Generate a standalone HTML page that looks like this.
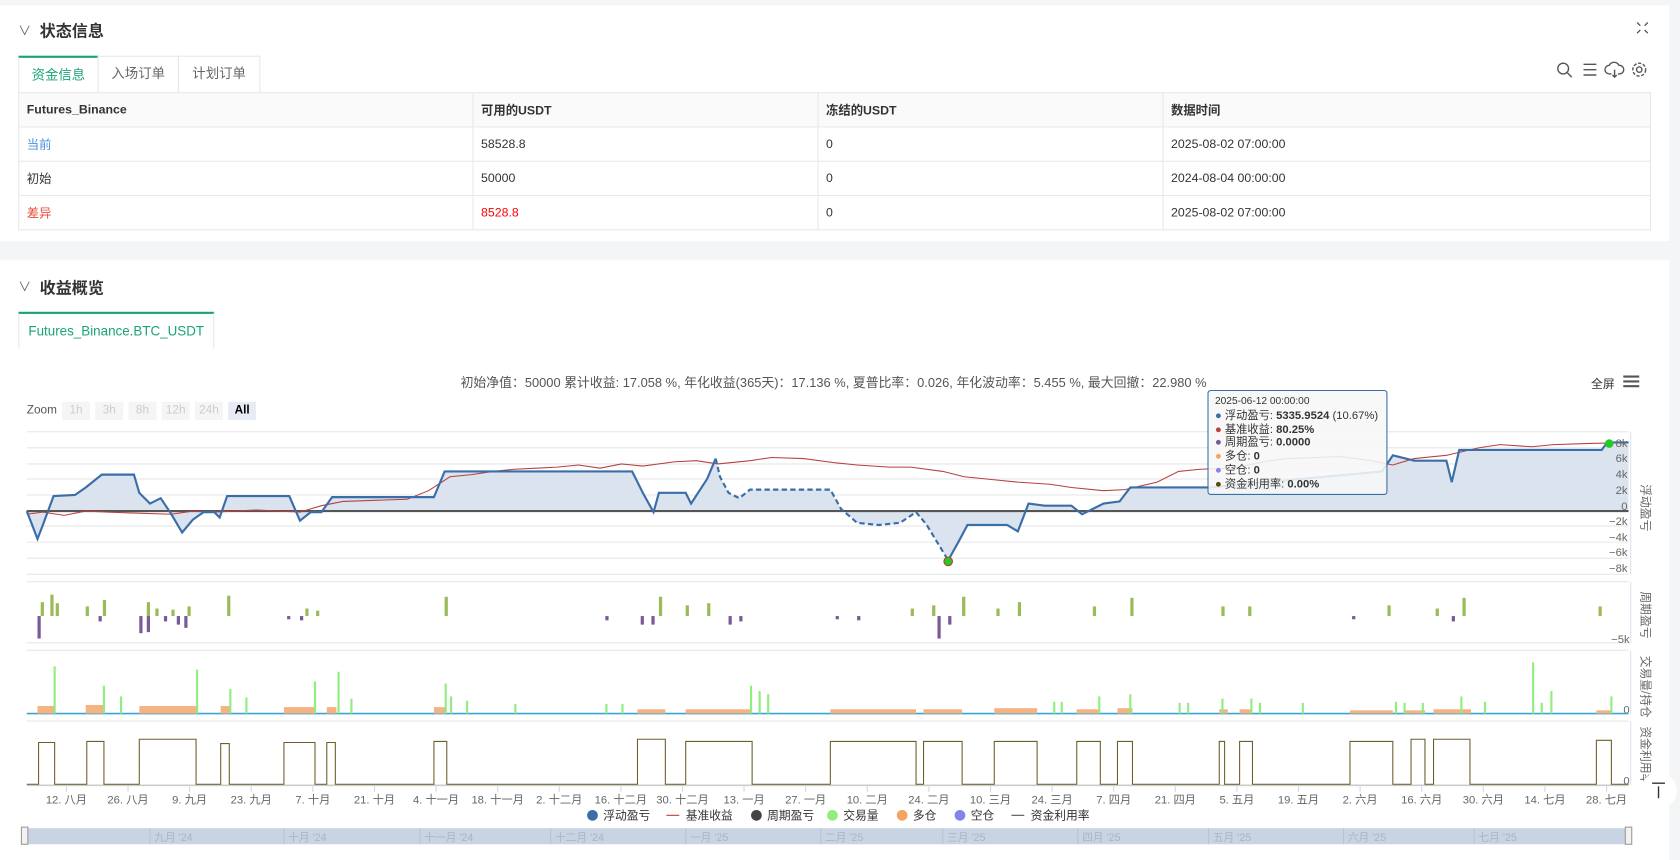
<!DOCTYPE html>
<html><head><meta charset="utf-8"><style>
html,body{margin:0;padding:0;width:1680px;height:860px;overflow:hidden;background:#f4f5f7;font-family:"Liberation Sans","Noto Sans CJK SC",sans-serif;}
#w{position:absolute;left:0;top:0;width:1568px;height:803px;transform:scale(1.0714);transform-origin:0 0;}
.p{position:absolute;left:0;width:1558px;background:#fff;}
.a{position:absolute;white-space:nowrap;}
table{border-collapse:collapse;position:absolute;left:17px;top:86px;width:1524px;font-size:11.5px;color:#333;}
td{border:1px solid #e8e8e8;height:31px;padding:0 0 0 7px;}
tr.h td{background:#fafafa;font-weight:bold;}
.tab{position:absolute;top:52px;height:34px;border:1px solid #e8e8e8;border-bottom:none;font-size:12.5px;color:#666;text-align:center;line-height:33px;box-sizing:border-box;}
.zb{position:absolute;top:375px;width:26px;height:17px;background:#f5f5f5;color:#ccc;font-size:11px;text-align:center;line-height:17px;}
</style></head><body><div id="w">
<div class="p" style="top:5px;height:220px"></div>
<div class="p" style="top:243px;height:560px"></div>
<div class="a" style="left:17px;top:20px;font-size:12px;color:#666">∨</div>
<div class="a" style="left:37px;top:18px;font-size:15px;color:#333;font-weight:bold">状态信息</div>
<svg class="a" style="left:1527px;top:20px" width="12" height="12" fill="none" stroke="#555" stroke-width="1.2"><path d="M1 1l3 3M11 1l-3 3M1 11l3-3M11 11l-3-3"/></svg>
<div class="tab" style="left:17px;width:75px;border-top:2px solid #1aa37a;color:#1aa37a">资金信息</div>
<div class="tab" style="left:91px;width:76px">入场订单</div>
<div class="tab" style="left:166px;width:77px">计划订单</div>
<svg class="a" style="left:1450px;top:56px" width="95" height="20" fill="none" stroke="#555" stroke-width="1.3">
<circle cx="9" cy="8" r="5"/><path d="M13 12l4 4"/>
<path d="M28 4h12M28 9h12M28 14h12"/>
<path d="M54 13h-2a4 4 0 0 1 0-8 5 5 0 0 1 9 0 4 4 0 0 1 1 8h-2M57 9v7M55 14l2 2 2-2"/>
<circle cx="80" cy="9" r="2.5"/><circle cx="80" cy="9" r="6" stroke-dasharray="3 1.5"/>
</svg>
<table>
<tr class="h"><td style="width:416px">Futures_Binance</td><td style="width:314px">可用的USDT</td><td style="width:314px">冻结的USDT</td><td>数据时间</td></tr>
<tr><td style="color:#4a90e2">当前</td><td>58528.8</td><td>0</td><td>2025-08-02 07:00:00</td></tr>
<tr><td>初始</td><td>50000</td><td>0</td><td>2024-08-04 00:00:00</td></tr>
<tr><td style="color:#e74c3c">差异</td><td style="color:#f00">8528.8</td><td>0</td><td>2025-08-02 07:00:00</td></tr>
</table>
<div class="a" style="left:17px;top:259px;font-size:12px;color:#666">∨</div>
<div class="a" style="left:37px;top:258px;font-size:15px;color:#333;font-weight:bold">收益概览</div>
<div class="tab" style="left:17px;top:291px;width:183px;border-top:2px solid #1aa37a;color:#1aa37a">Futures_Binance.BTC_USDT</div>
<div class="a" style="left:0;width:1556px;top:348px;text-align:center;font-size:12px;color:#555">初始净值：50000 累计收益: 17.058 %, 年化收益(365天)：17.136 %, 夏普比率：0.026, 年化波动率：5.455 %, 最大回撤：22.980 %</div>
<div class="a" style="left:1485px;top:350px;font-size:11px;color:#333">全屏</div>
<svg class="a" style="left:1515px;top:350px" width="16" height="12"><path d="M0 1.5h15M0 6h15M0 10.5h15" stroke="#555" stroke-width="2"/></svg>
<div class="a" style="left:25px;top:377px;font-size:11px;color:#555">Zoom</div>
<div class="zb" style="left:58px">1h</div><div class="zb" style="left:89px">3h</div><div class="zb" style="left:120px">8h</div><div class="zb" style="left:151px">12h</div><div class="zb" style="left:182px">24h</div><div class="zb" style="left:213px;background:#e6ebf5;color:#000;font-weight:bold">All</div>
<svg class="a" style="left:0;top:0" width="1568" height="803" font-family="Liberation Sans, Noto Sans CJK SC, sans-serif" font-size="10.5" fill="#666">
<g stroke="#e6e6e6" stroke-width="1">
<path d="M25 403H1520M25 418H1520M25 433H1520M25 447H1520M25 462H1520M25 491H1520M25 506H1520M25 521H1520M25 536H1520M25 543H1520M25 600H1520M25 607H1520M25 673H1520"/>
</g>
<path d="M1522 403V536M1522 543V600M1522 607V667M1522 673V733" stroke="#dde3ee"/>
<polygon fill="#dbe3ee" points="25,477 35,503 40,490 50,463 70,462 80,455 95,443 125,443 130,460 140,470 150,465 160,480 170,497 180,485 190,478 200,478 205,483 212,463 270,463 280,486 290,478 300,478 310,464 405,464 415,440 590,440 600,460 610,478 615,460 640,460 645,470 660,447 668,428 672,445 680,460 690,465 700,457 775,457 785,475 800,488 820,490 840,488 855,478 865,490 885,523 895,505 903,490 940,490 950,496 960,470 975,472 1000,472 1010,480 1030,470 1045,468 1055,455 1130,455 1150,453 1290,440 1300,425 1320,430 1350,430 1355,450 1362,420 1465,420 1495,420 1500,413 1520,413 1520,477"/>
<path d="M25 477H1520" stroke="#555" stroke-width="2"/>
<polyline fill="none" stroke="#b94040" stroke-width="1" points="25,480 40,478 60,481 80,477 100,478 130,479 160,480 180,477 200,478 240,476 280,478 300,472 320,468 350,467 380,466 400,458 420,445 440,443 460,440 480,438 500,437 520,436 540,434 560,437 580,433 600,435 630,431 650,430 670,433 700,430 720,427 750,428 780,432 800,434 830,436 850,436 880,440 900,445 930,448 950,450 980,452 1000,455 1030,458 1050,457 1080,450 1100,440 1120,438 1150,437 1180,431 1200,428 1230,427 1250,426 1280,430 1300,434 1320,428 1350,425 1380,418 1400,415 1430,417 1450,415 1480,414 1520,413"/>
<polyline fill="none" stroke="#3a6ea8" stroke-width="2" points="25,477 35,503 40,490 50,463 70,462 80,455 95,443 125,443 130,460 140,470 150,465 160,480 170,497 180,485 190,478 200,478 205,483 212,463 270,463 280,486 290,478 300,478 310,464 405,464 415,440 590,440 600,460 610,478 615,460 640,460 645,470 660,447 668,428"/>
<polyline fill="none" stroke="#3a6ea8" stroke-width="2" stroke-dasharray="5 3" points="668,428 672,445 680,460 690,465 700,457 775,457 785,475 800,488 820,490 840,488 855,478 865,490 885,523"/>
<polyline fill="none" stroke="#3a6ea8" stroke-width="2" points="885,523 895,505 903,490 940,490 950,496 960,470 975,472 1000,472 1010,480 1030,470 1045,468 1055,455 1130,455 1150,453 1290,440 1300,425 1320,430 1350,430 1355,450 1362,420 1465,420 1495,420 1500,413 1520,413"/>
<circle cx="885" cy="524" r="4" fill="#2c2" stroke="#c33"/><circle cx="1502" cy="414" r="4" fill="#2c2"/>
<g text-anchor="end"><text x="1519" y="417">8k</text><text x="1519" y="431">6k</text><text x="1519" y="446">4k</text><text x="1519" y="461">2k</text><text x="1519" y="476">0</text><text x="1519" y="490">−2k</text><text x="1519" y="505">−4k</text><text x="1519" y="519">−6k</text><text x="1519" y="534">−8k</text><text x="1521" y="600">−5k</text><text x="1521" y="666">0</text><text x="1521" y="732">0</text></g>
<g font-size="11"><text transform="translate(1532,452) rotate(90)">浮动盈亏</text><text transform="translate(1532,552) rotate(90)">周期盈亏</text><text transform="translate(1532,612) rotate(90)">交易量/持仓</text><text transform="translate(1532,678) rotate(90)">资金利用率</text></g>
<g fill="#9bbb59"><rect x="38" y="562" width="3" height="13"/><rect x="47" y="555" width="3" height="20"/><rect x="52" y="563" width="3" height="12"/><rect x="80" y="566" width="3" height="9"/><rect x="96" y="560" width="3" height="15"/><rect x="137" y="562" width="3" height="13"/><rect x="145" y="568" width="3" height="7"/><rect x="160" y="569" width="3" height="6"/><rect x="175" y="566" width="3" height="9"/><rect x="212" y="556" width="3" height="19"/><rect x="285" y="568" width="3" height="7"/><rect x="295" y="570" width="3" height="5"/><rect x="415" y="557" width="3" height="18"/><rect x="615" y="557" width="3" height="18"/><rect x="640" y="565" width="3" height="10"/><rect x="660" y="563" width="3" height="12"/><rect x="850" y="568" width="3" height="7"/><rect x="870" y="565" width="3" height="10"/><rect x="898" y="557" width="3" height="18"/><rect x="930" y="568" width="3" height="7"/><rect x="950" y="562" width="3" height="13"/><rect x="1020" y="566" width="3" height="9"/><rect x="1055" y="558" width="3" height="17"/><rect x="1140" y="566" width="3" height="9"/><rect x="1165" y="566" width="3" height="9"/><rect x="1295" y="565" width="3" height="10"/><rect x="1340" y="568" width="3" height="7"/><rect x="1365" y="558" width="3" height="17"/><rect x="1492" y="566" width="3" height="9"/></g>
<g fill="#7a5a96"><rect x="35" y="575" width="3" height="21"/><rect x="92" y="575" width="3" height="5"/><rect x="130" y="575" width="3" height="16"/><rect x="137" y="575" width="3" height="15"/><rect x="153" y="575" width="3" height="5"/><rect x="165" y="575" width="3" height="8"/><rect x="172" y="575" width="3" height="11"/><rect x="268" y="575" width="3" height="3"/><rect x="280" y="575" width="3" height="4"/><rect x="565" y="575" width="3" height="4"/><rect x="598" y="575" width="3" height="8"/><rect x="608" y="575" width="3" height="8"/><rect x="680" y="575" width="3" height="8"/><rect x="690" y="575" width="3" height="5"/><rect x="780" y="575" width="3" height="3"/><rect x="800" y="575" width="3" height="4"/><rect x="875" y="575" width="3" height="21"/><rect x="885" y="575" width="3" height="8"/><rect x="1262" y="575" width="3" height="3"/><rect x="1355" y="575" width="3" height="5"/></g>
<path d="M25 666H1520" stroke="#3ba3d6" stroke-width="1.5"/>
<g fill="#f4b380"><rect x="35" y="659" width="16" height="7"/><rect x="80" y="658" width="17" height="8"/><rect x="130" y="659" width="54" height="7"/><rect x="206" y="659" width="9" height="7"/><rect x="265" y="660" width="29" height="6"/><rect x="305" y="660" width="9" height="6"/><rect x="405" y="660" width="12" height="6"/><rect x="595" y="662" width="26" height="4"/><rect x="640" y="662" width="62" height="4"/><rect x="775" y="662" width="80" height="4"/><rect x="862" y="662" width="36" height="4"/><rect x="928" y="661" width="40" height="5"/><rect x="1005" y="662" width="22" height="4"/><rect x="1043" y="661" width="14" height="5"/><rect x="1138" y="662" width="8" height="4"/><rect x="1157" y="662" width="12" height="4"/><rect x="1260" y="663" width="40" height="3"/><rect x="1310" y="663" width="20" height="3"/><rect x="1338" y="662" width="35" height="4"/><rect x="1490" y="663" width="14" height="3"/></g>
<g fill="#90ee7e"><rect x="50" y="622" width="2" height="44"/><rect x="96" y="640" width="2" height="26"/><rect x="112" y="650" width="2" height="16"/><rect x="183" y="625" width="2" height="41"/><rect x="214" y="643" width="2" height="23"/><rect x="229" y="651" width="2" height="15"/><rect x="293" y="636" width="2" height="30"/><rect x="315" y="627" width="2" height="39"/><rect x="327" y="652" width="2" height="14"/><rect x="415" y="638" width="2" height="28"/><rect x="420" y="650" width="2" height="16"/><rect x="435" y="654" width="2" height="12"/><rect x="480" y="657" width="2" height="9"/><rect x="565" y="657" width="2" height="9"/><rect x="580" y="657" width="2" height="9"/><rect x="700" y="640" width="2" height="26"/><rect x="708" y="645" width="2" height="21"/><rect x="716" y="648" width="2" height="18"/><rect x="983" y="655" width="2" height="11"/><rect x="990" y="655" width="2" height="11"/><rect x="1025" y="650" width="2" height="16"/><rect x="1054" y="648" width="2" height="18"/><rect x="1100" y="656" width="2" height="10"/><rect x="1108" y="656" width="2" height="10"/><rect x="1140" y="652" width="2" height="14"/><rect x="1167" y="652" width="2" height="14"/><rect x="1175" y="656" width="2" height="10"/><rect x="1215" y="656" width="2" height="10"/><rect x="1302" y="655" width="2" height="11"/><rect x="1310" y="656" width="2" height="10"/><rect x="1327" y="656" width="2" height="10"/><rect x="1363" y="650" width="2" height="16"/><rect x="1385" y="655" width="2" height="11"/><rect x="1430" y="618" width="2" height="48"/><rect x="1438" y="656" width="2" height="10"/><rect x="1447" y="645" width="2" height="21"/><rect x="1503" y="650" width="2" height="16"/></g>
<path d="M25 733H1520" stroke="#ccc" stroke-width="1.5"/>
<polyline fill="none" stroke="#6b5e2a" stroke-width="1" points="25,732 36,732 36,693 51,693 51,732 81,732 81,692 97,692 97,732 130,732 130,690 183,690 183,732 206,732 206,694 214,694 214,732 265,732 265,693 294,693 294,732 305,732 305,693 313,693 313,732 405,732 405,692 417,692 417,732 595,732 595,690 621,690 621,732 640,732 640,692 702,692 702,732 775,732 775,692 855,692 855,732 862,732 862,692 898,692 898,732 928,732 928,692 968,692 968,732 1005,732 1005,692 1027,692 1027,732 1043,732 1043,692 1057,692 1057,732 1138,732 1138,692 1143,692 1143,732 1157,732 1157,692 1169,692 1169,732 1260,732 1260,692 1300,692 1300,732 1317,732 1317,690 1330,690 1330,732 1338,732 1338,690 1372,690 1372,732 1490,732 1490,691 1504,691 1504,732 1520,732"/>
<path stroke="#ccd6eb" d="M62 734v5M119.5 734v5M177 734v5M234.5 734v5M292 734v5M349.5 734v5M407 734v5M464.5 734v5M522 734v5M579.5 734v5M637 734v5M694.5 734v5M752 734v5M809.5 734v5M867 734v5M924.5 734v5M982 734v5M1039.5 734v5M1097 734v5M1154.5 734v5M1212 734v5M1269.5 734v5M1327 734v5M1384.5 734v5M1442 734v5M1499.5 734v5"/>
<g text-anchor="middle"><text x="62" y="750">12. 八月</text><text x="119.5" y="750">26. 八月</text><text x="177" y="750">9. 九月</text><text x="234.5" y="750">23. 九月</text><text x="292" y="750">7. 十月</text><text x="349.5" y="750">21. 十月</text><text x="407" y="750">4. 十一月</text><text x="464.5" y="750">18. 十一月</text><text x="522" y="750">2. 十二月</text><text x="579.5" y="750">16. 十二月</text><text x="637" y="750">30. 十二月</text><text x="694.5" y="750">13. 一月</text><text x="752" y="750">27. 一月</text><text x="809.5" y="750">10. 二月</text><text x="867" y="750">24. 二月</text><text x="924.5" y="750">10. 三月</text><text x="982" y="750">24. 三月</text><text x="1039.5" y="750">7. 四月</text><text x="1097" y="750">21. 四月</text><text x="1154.5" y="750">5. 五月</text><text x="1212" y="750">19. 五月</text><text x="1269.5" y="750">2. 六月</text><text x="1327" y="750">16. 六月</text><text x="1384.5" y="750">30. 六月</text><text x="1442" y="750">14. 七月</text><text x="1499.5" y="750">28. 七月</text></g>
<g font-size="11" fill="#333"><circle cx="553" cy="761" r="5" fill="#3a6ea8"/><text x="563" y="765">浮动盈亏</text><path d="M622 761h12" stroke="#b94040"/><text x="640" y="765">基准收益</text><circle cx="706" cy="761" r="5" fill="#444"/><text x="716" y="765">周期盈亏</text><circle cx="777" cy="761" r="5" fill="#90ee7e"/><text x="787" y="765">交易量</text><circle cx="842" cy="761" r="5" fill="#f4a460"/><text x="852" y="765">多仓</text><circle cx="896" cy="761" r="5" fill="#8085e9"/><text x="906" y="765">空仓</text><path d="M944 761h12" stroke="#555"/><text x="962" y="765">资金利用率</text></g>
<rect x="22" y="773" width="1500" height="15" fill="#c8d4e3"/>
<path stroke="#b8c4d4" d="M140 773v15M265 773v15M392 773v15M514 773v15M640 773v15M766 773v15M880 773v15M1006 773v15M1128 773v15M1254 773v15M1376 773v15"/>
<rect x="20" y="772" width="6" height="16" fill="#f2f2f2" stroke="#999"/><rect x="1517" y="772" width="6" height="16" fill="#f2f2f2" stroke="#999"/>
<g fill="#aab4c4" font-size="10"><text x="144" y="785">九月 '24</text><text x="269" y="785">十月 '24</text><text x="396" y="785">十一月 '24</text><text x="518" y="785">十二月 '24</text><text x="644" y="785">一月 '25</text><text x="770" y="785">二月 '25</text><text x="884" y="785">三月 '25</text><text x="1010" y="785">四月 '25</text><text x="1132" y="785">五月 '25</text><text x="1258" y="785">六月 '25</text><text x="1380" y="785">七月 '25</text></g>
<circle cx="1548" cy="738" r="17" fill="#fff"/><path d="M1542 731h12M1548 734v11" stroke="#333" stroke-width="1.3"/>
</svg>
<div class="a" style="left:1127px;top:364px;width:168px;height:98px;background:rgba(247,247,247,0.88);border:1px solid #3a6ea8;border-radius:3px;font-size:10.5px;color:#333;line-height:12.8px;padding:4px 6px;box-sizing:border-box">
<div style="font-size:9.5px">2025-06-12 00:00:00</div>
<div><span style="color:#3a6ea8">●</span> 浮动盈亏: <b>5335.9524</b> (10.67%)</div>
<div><span style="color:#b94040">●</span> 基准收益: <b>80.25%</b></div>
<div><span style="color:#7a5a96">●</span> 周期盈亏: <b>0.0000</b></div>
<div><span style="color:#f4a460">●</span> 多仓: <b>0</b></div>
<div><span style="color:#8085e9">●</span> 空仓: <b>0</b></div>
<div><span style="color:#5a4a10">●</span> 资金利用率: <b>0.00%</b></div>
</div>
</div></body></html>
